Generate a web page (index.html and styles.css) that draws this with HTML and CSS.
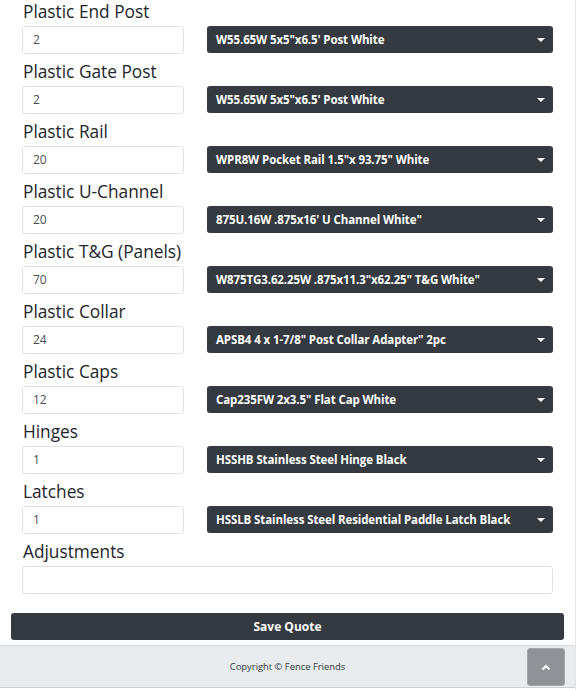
FILE: index.html
```html
<!DOCTYPE html>
<html>
<head>
<meta charset="utf-8">
<link rel="stylesheet" href="styles.css">
</head>
<body>
<div class="page">
  <form class="quote">
    <div class="field">
      <div class="label">Plastic End Post</div>
      <div class="pair">
        <div class="qty">2</div>
        <div class="select"><span>W55.65W 5x5"x6.5' Post White</span><i class="caret"></i></div>
      </div>
    </div>
    <div class="field">
      <div class="label">Plastic Gate Post</div>
      <div class="pair">
        <div class="qty">2</div>
        <div class="select"><span>W55.65W 5x5"x6.5' Post White</span><i class="caret"></i></div>
      </div>
    </div>
    <div class="field">
      <div class="label">Plastic Rail</div>
      <div class="pair">
        <div class="qty">20</div>
        <div class="select"><span>WPR8W Pocket Rail 1.5"x 93.75" White</span><i class="caret"></i></div>
      </div>
    </div>
    <div class="field">
      <div class="label">Plastic U-Channel</div>
      <div class="pair">
        <div class="qty">20</div>
        <div class="select"><span>875U.16W .875x16' U Channel White"</span><i class="caret"></i></div>
      </div>
    </div>
    <div class="field">
      <div class="label">Plastic T&amp;G (Panels)</div>
      <div class="pair">
        <div class="qty">70</div>
        <div class="select"><span>W875TG3.62.25W .875x11.3"x62.25" T&amp;G White"</span><i class="caret"></i></div>
      </div>
    </div>
    <div class="field">
      <div class="label">Plastic Collar</div>
      <div class="pair">
        <div class="qty">24</div>
        <div class="select"><span>APSB4 4 x 1-7/8" Post Collar Adapter" 2pc</span><i class="caret"></i></div>
      </div>
    </div>
    <div class="field">
      <div class="label">Plastic Caps</div>
      <div class="pair">
        <div class="qty">12</div>
        <div class="select"><span>Cap235FW 2x3.5" Flat Cap White</span><i class="caret"></i></div>
      </div>
    </div>
    <div class="field">
      <div class="label">Hinges</div>
      <div class="pair">
        <div class="qty">1</div>
        <div class="select"><span>HSSHB Stainless Steel Hinge Black</span><i class="caret"></i></div>
      </div>
    </div>
    <div class="field">
      <div class="label">Latches</div>
      <div class="pair">
        <div class="qty">1</div>
        <div class="select"><span>HSSLB Stainless Steel Residential Paddle Latch Black</span><i class="caret"></i></div>
      </div>
    </div>
    <div class="field">
      <div class="label">Adjustments</div>
      <div class="wide"></div>
    </div>
  </form>
  <div class="save">Save Quote</div>
  <footer class="footer">
    <span class="copy">Copyright © Fence Friends</span>
    <div class="totop">
      <svg width="10" height="7" viewBox="0 0 10 7"><path d="M1.5 5.5 L5 2 L8.5 5.5" fill="none" stroke="#fff" stroke-width="2"/></svg>
    </div>
  </footer>
</div>
</body>
</html>
```
FILE: styles.css
```css
* { box-sizing: border-box; }
html, body { margin: 0; padding: 0; background: #fff; }
body {
  font-family: "Open Sans", "Noto Sans", "DejaVu Sans", sans-serif;
  color: #212529;
  width: 577px;
  height: 690px;
  overflow: hidden;
}
.page {
  border-right: 1px solid #e3e3e3;
  width: 576px;
  height: 690px;
}
.quote {
  padding: 0 22px 0 22px;
}
.field {
  height: 60px;
}
.label {
  font-size: 17.3px;
  line-height: 24px;
  height: 26px;
  padding-left: 1px;
  color: #212529;
}
.pair {
  display: grid;
  grid-template-columns: 162px 1fr;
  column-gap: 23px;
  align-items: start;
}
.qty {
  height: 28px;
  border: 1px solid #dfe2e6;
  border-radius: 3px;
  font-size: 12px;
  line-height: 26px;
  padding-left: 10px;
  color: #495057;
}
.select {
  height: 27px;
  background: #343a40;
  border-radius: 3px;
  color: #fff;
  font-weight: 700;
  font-size: 11.5px;
  display: flex;
  align-items: center;
  justify-content: space-between;
  padding: 0 6px 0 9px;
  letter-spacing: -0.1px;
}
.caret {
  width: 0; height: 0;
  border-left: 4px solid transparent;
  border-right: 4px solid transparent;
  border-top: 4px solid #fff;
  margin-right: 2px;
}
.wide {
  height: 28px;
  border: 1px solid #dfe2e6;
  border-radius: 3px;
}
.save {
  margin: 13px 11px 0 11px;
  height: 27px;
  background: #343a40;
  border-radius: 3px;
  color: #fff;
  font-weight: 700;
  font-size: 12px;
  display: flex;
  align-items: center;
  justify-content: center;
}
.footer {
  margin-top: 5px;
  height: 43px;
  background: #e9ecef;
  border-top: 1px solid #d6d8db;
  border-bottom: 1px solid #cfd2d5;
  display: flex;
  align-items: center;
  justify-content: center;
  position: relative;
}
.copy {
  font-size: 9.4px;
  color: #343a40;
}
.totop {
  position: absolute;
  left: 527px;
  top: 2px;
  width: 38px;
  height: 38px;
  background: #8f9397;
  border: 1px solid #a3a7ab;
  border-radius: 3px;
  display: flex;
  align-items: center;
  justify-content: center;
}
```
